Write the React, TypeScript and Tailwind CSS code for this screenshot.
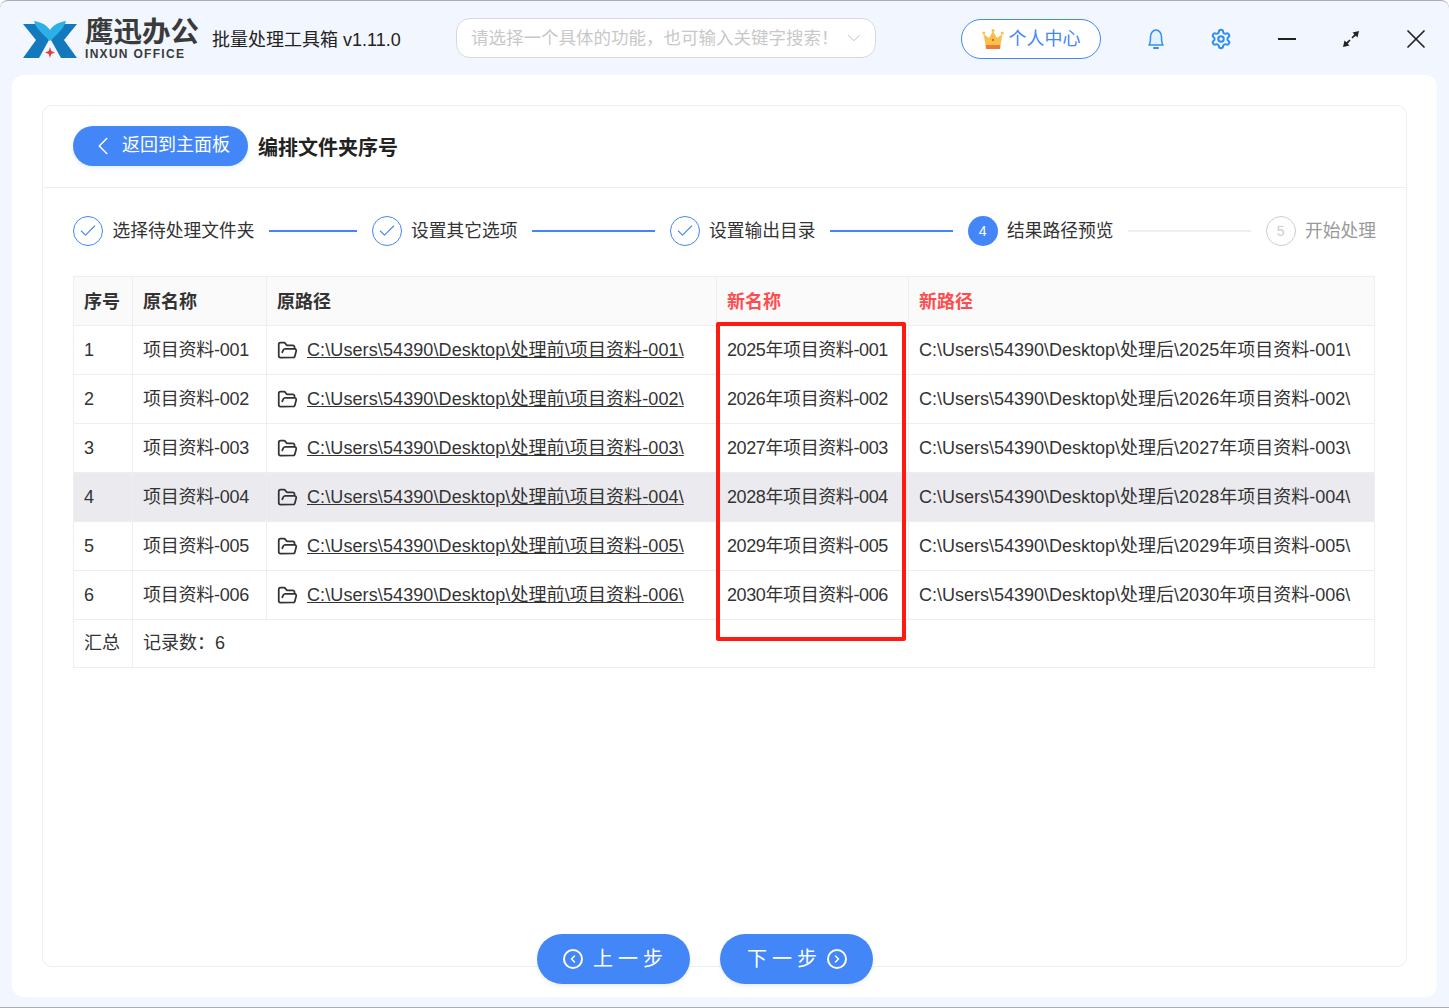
import { Check, ChevronDown, ChevronLeft, ChevronRight, FolderOpen, Settings, X } from "lucide-react";

const FONT = "font-['Liberation_Sans','Noto_Sans_CJK_SC',sans-serif]";

const ROWS = [
  { no: 1, seq: "001", year: 2025 },
  { no: 2, seq: "002", year: 2026 },
  { no: 3, seq: "003", year: 2027 },
  { no: 4, seq: "004", year: 2028 },
  { no: 5, seq: "005", year: 2029 },
  { no: 6, seq: "006", year: 2030 },
];

const STEPS = [
  { label: "选择待处理文件夹", line: "w-[88px]" },
  { label: "设置其它选项", line: "w-[123px]" },
  { label: "设置输出目录", line: "w-[123px]" },
];

const Logo = () => (
  <svg width="54" height="37" viewBox="0 0 54 37">
    <path d="M0 3H15L26 19L16 37H0L13 19Z" fill="#1478bd" />
    <path d="M54 3H39L28 19L38 37H54L41 19Z" fill="#1478bd" />
    <path d="M11 0C18 1 24 4 27 9C30 4 36 1 43 0C41 8 33 14 27 20C21 14 13 8 11 0Z" fill="#2db0e8" />
    <path d="M27 26L28.200 30L32 31.500L28.200 33L27 37L25.800 33L22 31.500L25.800 30Z" fill="#f0363c" />
  </svg>
);

const Crown = () => (
  <svg width="22" height="22" viewBox="0 0 22 22">
    <path d="M1.500 6L7 10L11 3L15 10L20.500 6L18.500 17H3.500Z" fill="#f9c14c" />
    <path d="M3.500 17H18.500L18 21H4Z" fill="#ee7b35" />
    <circle cx="11" cy="12" r="1" fill="#d9472b" />
    <circle cx="1.800" cy="5" r="1.500" fill="#f9c14c" />
    <circle cx="20.200" cy="5" r="1.500" fill="#f9c14c" />
    <circle cx="11" cy="2.500" r="1.500" fill="#f9c14c" />
  </svg>
);

const BellIcon = () => (
  <svg width="18" height="22" viewBox="0 0 18 22" fill="none" stroke="#2f8ef5" strokeWidth="1.500">
    <path d="M2 17C3.500 15 3.500 13 3.500 9C3.500 5 6 2 9 2C12 2 14.500 5 14.500 9C14.500 13 14.500 15 16 17Z" fill="#e4f1ff" strokeLinejoin="round" />
    <path d="M7 20H11" strokeLinecap="round" strokeWidth="2" />
  </svg>
);

const Expand = () => (
  <svg width="18" height="18" viewBox="0 0 18 18" fill="#222">
    <path d="M17 1L10.500 2.500L12.300 4.300L9.500 7.500L10.500 8.500L13.700 5.700L15.500 7.500Z" />
    <path d="M1 17L7.500 15.500L5.700 13.700L8.500 10.500L7.500 9.500L4.300 12.300L2.500 10.500Z" />
  </svg>
);

const App = () => {
  return (
    <div className={`${FONT} w-[1449px] h-[1008px] overflow-hidden flex flex-col bg-[#f2f6fe] border-t border-b border-[#a9adb3] rounded-t-[8px] text-[#333]`}>
      {/* Title bar */}
      <div className="h-[74px] shrink-0 flex items-center pl-[23px] pt-[2px]">
        <Logo />
        <div className="ml-[8px] w-[113px] flex flex-col">
          <span className="text-[28.5px] leading-[30px] font-bold text-[#3a3a3a] whitespace-nowrap">鹰迅办公</span>
          <span className="text-[12px] leading-[14px] font-bold tracking-[1.3px] text-[#3a3a3a] whitespace-nowrap">INXUN OFFICE</span>
        </div>
        <span className="ml-[14px] mt-[2px] w-[210px] text-[18px] text-[#222] whitespace-nowrap">批量处理工具箱 v1.11.0</span>
        <div className="ml-[34px] -mt-[2px] w-[420px] h-[40px] bg-white border border-[#d9d9d9] rounded-[14px] flex items-center justify-between pl-[14px] pr-[10px]">
          <span className="text-[17.5px] text-[#c8c8c8] whitespace-nowrap">请选择一个具体的功能，也可输入关键字搜索！</span>
          <ChevronDown className="w-[22px] h-[22px] text-[#bbb]" strokeWidth={1} />
        </div>
        <button className="ml-[85px] w-[140px] h-[40px] bg-white border border-[#4286f8] rounded-full flex items-center justify-center gap-[5px] text-[18px] text-[#4286f8]">
          <Crown />
          个人中心
        </button>
        <span className="ml-[46px]"><BellIcon /></span>
        <Settings className="ml-[45px] w-[22px] h-[22px] text-[#2f8ef5]" strokeWidth={2.200} />
        <div className="ml-[46px] w-[18px] h-[2px] bg-[#222]" />
        <div className="ml-[46px]"><Expand /></div>
        <X className="ml-[40px] w-[32px] h-[32px] text-[#222]" strokeWidth={1.300} />
      </div>

      {/* Main card */}
      <div className="mx-[12px] h-[922px] bg-white rounded-[12px] p-[30px] pb-[30px]">
        <div className="h-[862px] border border-[#eeeeee] rounded-[10px] flex flex-col">
          {/* Header */}
          <div className="h-[82px] shrink-0 border-b border-[#eeeeee] flex items-center pl-[30px] pb-[2px]">
            <button className="w-[175px] h-[40px] rounded-full bg-[#4286f8] text-white text-[18px] flex items-center pl-[15px] gap-[4px] shadow-[0_2px_4px_rgba(66,134,248,0.15)]">
              <ChevronLeft className="w-[30px] h-[30px]" strokeWidth={1.200} />
              返回到主面板
            </button>
            <h1 className="ml-[10px] mt-[4px] text-[20px] font-bold text-[#222]">编排文件夹序号</h1>
          </div>

          {/* Steps */}
          <div className="h-[88px] shrink-0 flex items-center pl-[30px] pb-[2px] text-[17.75px] text-[#333] whitespace-nowrap">
            {STEPS.map((s) => (
              <div key={s.label} className="flex items-center">
                <span className="w-[30px] h-[30px] rounded-full border border-[#4286f8] flex items-center justify-center">
                  <Check className="w-[20px] h-[20px] text-[#4286f8]" strokeWidth={1.300} />
                </span>
                <span className="ml-[9.5px]">{s.label}</span>
                <span className={`ml-[14px] mr-[15px] h-[2px] bg-[#4286f8] ${s.line}`} />
              </div>
            ))}
            <span className="w-[30px] h-[30px] rounded-full bg-[#4286f8] text-white text-[14px] flex items-center justify-center">4</span>
            <span className="ml-[9.5px]">结果路径预览</span>
            <span className="ml-[14px] mr-[15px] w-[123px] h-[2px] bg-[#eeeeee]" />
            <span className="w-[30px] h-[30px] rounded-full border border-[#cccccc] text-[#cccccc] text-[14px] flex items-center justify-center">5</span>
            <span className="ml-[9.5px] text-[#999]">开始处理</span>
          </div>

          {/* Table */}
          <div className="mx-[30px] relative text-[18px] text-[#333]">
            <table className="w-[1302px] table-fixed border-collapse border border-[#eeeeee]">
              <colgroup>
                <col className="w-[59px]" />
                <col className="w-[134px]" />
                <col className="w-[450px]" />
                <col className="w-[192px]" />
                <col />
              </colgroup>
              <thead>
                <tr className="h-[49px] bg-[#fafafa] font-bold text-left">
                  <th className="pl-[10px] pt-[3px] border border-[#eeeeee]">序号</th>
                  <th className="pl-[10px] pt-[3px] border border-[#eeeeee]">原名称</th>
                  <th className="pl-[10px] pt-[3px] border border-[#eeeeee]">原路径</th>
                  <th className="pl-[10px] pt-[3px] border border-[#eeeeee] text-[#ff4d4f]">新名称</th>
                  <th className="pl-[10px] pt-[3px] border border-[#eeeeee] text-[#ff4d4f]">新路径</th>
                </tr>
              </thead>
              <tbody>
                {ROWS.map((r) => (
                  <tr key={r.no} className={`h-[49px] ${r.no === 4 ? "bg-[#ebebef]" : ""}`}>
                    <td className="pl-[10px] border border-[#eeeeee]">{r.no}</td>
                    <td className="pl-[10px] border border-[#eeeeee] tracking-[-0.25px]">项目资料-{r.seq}</td>
                    <td className="pl-[10px] border border-[#eeeeee] whitespace-nowrap">
                      <span className="flex items-center gap-[9px]">
                        <FolderOpen className="w-[21px] h-[21px] text-[#333]" strokeWidth={2} />
                        <span className="underline tracking-[0.1px]">C:\Users\54390\Desktop\处理前\项目资料-{r.seq}\</span>
                      </span>
                    </td>
                    <td className="pl-[10px] border border-[#eeeeee] whitespace-nowrap tracking-[-0.4px]">{r.year}年项目资料-{r.seq}</td>
                    <td className="pl-[10px] border border-[#eeeeee] whitespace-nowrap">C:\Users\54390\Desktop\处理后\{r.year}年项目资料-{r.seq}\</td>
                  </tr>
                ))}
                <tr className="h-[48px]">
                  <td className="pl-[10px] border border-[#eeeeee]">汇总</td>
                  <td colSpan={4} className="pl-[10px] border border-[#eeeeee]">记录数：6</td>
                </tr>
              </tbody>
            </table>
            {/* red annotation box */}
            <div className="absolute left-[643px] top-[46px] w-[190px] h-[319px] border-[4px] border-[#ff1a12] rounded-[2px] pointer-events-none" />
          </div>

          {/* Footer buttons, hanging over the panel's bottom edge */}
          <div className="mt-auto -mb-[18px] pl-[494px] flex gap-[30px] relative text-white text-[20px] tracking-[5px]">
            <button className="w-[153px] h-[50px] rounded-full bg-[#4286f8] flex items-center pl-[26px] gap-[10px] shadow-[0_2px_4px_rgba(0,0,0,0.08)]">
              <span className="w-[20px] h-[20px] rounded-full border-2 border-white flex items-center justify-center">
                <ChevronLeft className="w-[12px] h-[12px]" strokeWidth={3} />
              </span>
              上一步
            </button>
            <button className="w-[153px] h-[50px] rounded-full bg-[#4286f8] flex items-center pl-[27px] gap-[5px] shadow-[0_2px_4px_rgba(0,0,0,0.08)]">
              下一步
              <span className="w-[20px] h-[20px] rounded-full border-2 border-white flex items-center justify-center">
                <ChevronRight className="w-[12px] h-[12px]" strokeWidth={3} />
              </span>
            </button>
          </div>
        </div>
      </div>
    </div>
  );
};

export default App;
